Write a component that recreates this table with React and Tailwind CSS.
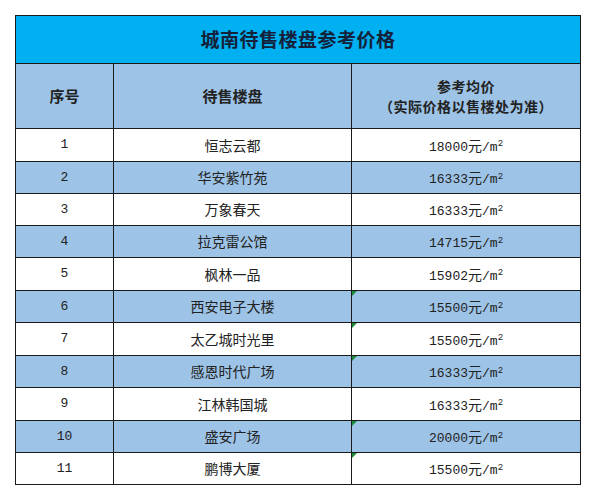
import React from "react";

const rows = [
  { no: "1", name: "恒志云都", price: "18000", h: "h-[33px]", mark: false },
  { no: "2", name: "华安紫竹苑", price: "16333", h: "h-[32px]", mark: false },
  { no: "3", name: "万象春天", price: "16333", h: "h-[32px]", mark: false },
  { no: "4", name: "拉克雷公馆", price: "14715", h: "h-[32px]", mark: false },
  { no: "5", name: "枫林一品", price: "15902", h: "h-[33px]", mark: false },
  { no: "6", name: "西安电子大楼", price: "15500", h: "h-[32px]", mark: true },
  { no: "7", name: "太乙城时光里", price: "15500", h: "h-[33px]", mark: true },
  { no: "8", name: "感恩时代广场", price: "16333", h: "h-[32px]", mark: true },
  { no: "9", name: "江林韩国城", price: "16333", h: "h-[33px]", mark: false },
  { no: "10", name: "盛安广场", price: "20000", h: "h-[32px]", mark: true },
  { no: "11", name: "鹏博大厦", price: "15500", h: "h-[32px]", mark: true },
];

const cjk = "font-['Noto_Sans_CJK_SC',sans-serif]";
const mono = "font-['Liberation_Mono','Noto_Sans_CJK_SC',monospace]";

export default function App() {
  return (
    <div className="w-[595px] h-[500px] bg-white pt-[15px] pl-[15px]">
      <table className="w-[565px] border-collapse table-fixed text-[#222]">
        <colgroup>
          <col className="w-[98px]" />
          <col className="w-[238px]" />
          <col className="w-[229px]" />
        </colgroup>
        <thead>
          <tr className="h-[48px] bg-[#00b0f0]">
            <th
              colSpan={3}
              className={`border border-[#1a1a1a] text-[19px] font-bold text-[#14213a] tracking-[0.5px] ${cjk}`}
            >
              城南待售楼盘参考价格
            </th>
          </tr>
          <tr className="h-[65px] bg-[#9dc3e6]">
            <th className={`border border-[#1a1a1a] text-[15px] font-bold ${cjk}`}>序号</th>
            <th className={`border border-[#1a1a1a] text-[15px] font-bold ${cjk}`}>待售楼盘</th>
            <th className={`border border-[#1a1a1a] text-[14px] font-bold leading-[20px] tracking-[0.5px] ${cjk}`}>
              <div>参考均价</div>
              <div>（实际价格以售楼处为准）</div>
            </th>
          </tr>
        </thead>
        <tbody>
          {rows.map((r, i) => (
            <tr key={r.no} className={`${r.h} ${i % 2 === 1 ? "bg-[#9dc3e6]" : "bg-white"}`}>
              <td className={`border border-[#1a1a1a] text-center text-[13px] ${mono}`}>{r.no}</td>
              <td className={`border border-[#1a1a1a] text-center text-[14px] ${cjk}`}>{r.name}</td>
              <td className="relative border border-[#1a1a1a] text-center">
                {r.mark && (
                  <span className="absolute left-0 top-0 w-0 h-0 border-t-[5px] border-r-[5px] border-t-[#1f8a3a] border-r-transparent" />
                )}
                <span className={`text-[13px] ${mono}`}>{r.price}</span>
                <span className={`text-[14px] ${cjk}`}>元</span>
                <span className={`text-[13px] ${mono}`}>/m</span>
                <sup className={`text-[9px] ${mono}`}>2</sup>
              </td>
            </tr>
          ))}
        </tbody>
      </table>
    </div>
  );
}
